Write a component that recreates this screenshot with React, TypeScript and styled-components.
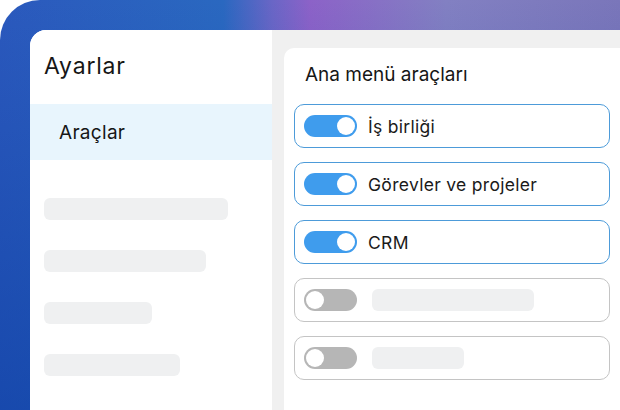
import React from 'react';
import styled, { createGlobalStyle } from 'styled-components';

// Type層
type Tool = { label?: string; enabled: boolean; skeletonWidth?: number };

const tools: Tool[] = [
  { label: 'İş birliği', enabled: true },
  { label: 'Görevler ve projeler', enabled: true },
  { label: 'CRM', enabled: true },
  { enabled: false, skeletonWidth: 162 },
  { enabled: false, skeletonWidth: 92 },
];

const sideSkeletons = [184, 162, 108, 136];

//Style層
const GlobalStyle = createGlobalStyle`
  html, body {
    margin: 0;
    padding: 0;
    background: #ffffff;
    overflow: hidden;
  }
  body {
    font-family: Inter, "Noto Sans", "Liberation Sans", sans-serif;
    color: #1b1b1b;
  }
`;

const Frame = styled.div`
  width: 620px;
  height: 410px;
  box-sizing: border-box;
  padding: 30px 0 0 30px;
  border-radius: 40px 0 0 0;
  overflow: hidden;
  background:
    linear-gradient(148deg, transparent 58%, rgba(255, 255, 255, 0.1) 58.5%, transparent 64%),
    linear-gradient(to bottom, rgba(255, 255, 255, 0) 0%, rgba(8, 60, 160, 0.55) 100%),
    linear-gradient(90deg, #2b59bd 0%, #2a68c0 36%, #6a66c6 44%, #8c62c8 50%, #8280c2 72%, #7a76ba 100%);
`;

const Panel = styled.div`
  height: 100%;
  display: grid;
  grid-template-columns: 242px 1fr;
  background: #ffffff;
  border-radius: 16px 0 0 0;
  overflow: hidden;
`;

const Sidebar = styled.aside`
  display: flex;
  flex-direction: column;
  background: #ffffff;
`;

const SideTitle = styled.h1`
  margin: 0;
  padding: 22px 0 0 14px;
  height: 74px;
  box-sizing: border-box;
  font-size: 23px;
  font-weight: 400;
  letter-spacing: 0.8px;
  color: #161616;
`;

const SideItem = styled.div<{ $active?: boolean }>`
  height: 56px;
  display: flex;
  align-items: center;
  padding-left: 29px;
  font-size: 19px;
  letter-spacing: 0.3px;
  color: #161616;
  background: ${(p) => (p.$active ? '#e8f5fd' : 'transparent')};
`;

const SkeletonList = styled.div`
  display: flex;
  flex-direction: column;
  gap: 30px;
  padding: 38px 0 0 14px;
`;

const Skeleton = styled.div<{ $w: number }>`
  width: ${(p) => p.$w}px;
  height: 22px;
  border-radius: 6px;
  background: #eff0f1;
`;

const Content = styled.main`
  background: #f0f0f0;
  padding: 18px 0 0 12px;
  display: flex;
`;

const Card = styled.section`
  flex: 1;
  background: #ffffff;
  border-radius: 10px 0 0 0;
  padding: 15px 10px 0 10px;
  display: flex;
  flex-direction: column;
`;

const CardTitle = styled.h2`
  margin: 0 0 18px 11px;
  font-size: 19px;
  font-weight: 400;
  color: #161616;
  line-height: 23px;
`;

const Rows = styled.div`
  display: flex;
  flex-direction: column;
  gap: 14px;
`;

const Row = styled.div<{ $on: boolean }>`
  height: 44px;
  box-sizing: border-box;
  border: 1px solid ${(p) => (p.$on ? '#4d9bd9' : '#c4c4c4')};
  border-radius: 10px;
  display: flex;
  align-items: center;
  gap: 11px;
  padding-left: 9px;
`;

const Toggle = styled.span<{ $on: boolean }>`
  position: relative;
  width: 53px;
  height: 22px;
  border-radius: 11px;
  flex-shrink: 0;
  background: ${(p) => (p.$on ? '#3f9ced' : '#b6b6b6')};

  &::after {
    content: '';
    position: absolute;
    top: 2px;
    left: ${(p) => (p.$on ? '33px' : '2px')};
    width: 18px;
    height: 18px;
    border-radius: 50%;
    background: #ffffff;
  }
`;

const Label = styled.span`
  font-size: 17.5px;
  letter-spacing: 0.3px;
  color: #1a1a1a;
`;

const RowSkeleton = styled(Skeleton)`
  margin-left: 4px;
`;

//DOM層
const App: React.FC = () => {
  return (
    <>
      <GlobalStyle />
      <Frame>
        <Panel>
          <Sidebar>
            <SideTitle>Ayarlar</SideTitle>
            <SideItem $active>Araçlar</SideItem>
            <SkeletonList>
              {sideSkeletons.map((w, i) => (
                <Skeleton key={i} $w={w} />
              ))}
            </SkeletonList>
          </Sidebar>
          <Content>
            <Card>
              <CardTitle>Ana menü araçları</CardTitle>
              <Rows>
                {tools.map((t, i) => (
                  <Row key={i} $on={t.enabled}>
                    <Toggle $on={t.enabled} />
                    {t.label ? (
                      <Label>{t.label}</Label>
                    ) : (
                      <RowSkeleton $w={t.skeletonWidth ?? 100} />
                    )}
                  </Row>
                ))}
              </Rows>
            </Card>
          </Content>
        </Panel>
      </Frame>
    </>
  );
};

export default App;
